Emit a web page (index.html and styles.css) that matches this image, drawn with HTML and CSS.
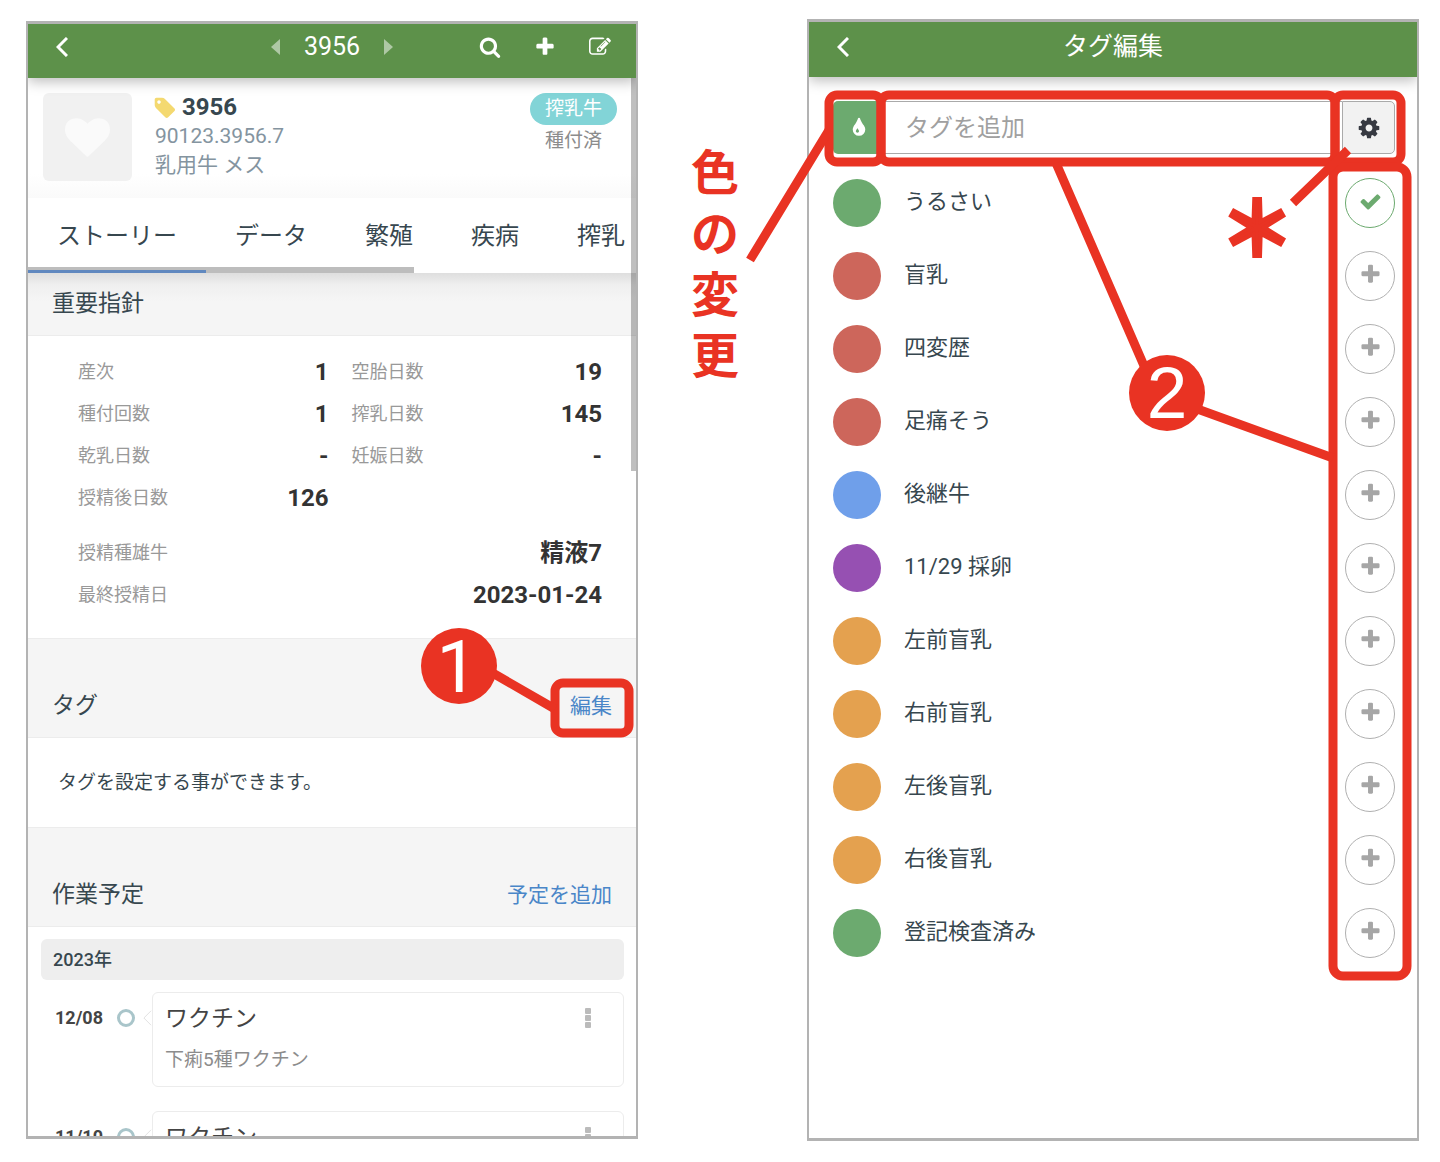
FILE: index.html
```html
<!DOCTYPE html>
<html lang="ja">
<head>
  <meta charset="UTF-8">
  <meta name="viewport" content="width=device-width, initial-scale=1.0">
  <title>タグ編集</title>
  <link rel="stylesheet" href="styles.css">
</head>
<body>
  <!-- Icon set -->
  <svg class="icon-set" aria-hidden="true">
    <symbol id="back" viewBox="0 0 12 20"><path d="M11 1L2 10l9 9" fill="none" stroke="currentColor" stroke-width="3"/></symbol>
    <symbol id="prev" viewBox="0 0 9 16"><path d="M9 0v16L0 8z"/></symbol>
    <symbol id="next" viewBox="0 0 9 16"><path d="M0 0v16l9-8z"/></symbol>
    <symbol id="search" viewBox="0 0 1792 1792"><path d="M1216 832q0-185-131.500-316.500t-316.500-131.500-316.500 131.500-131.500 316.500 131.500 316.500 316.500 131.500 316.500-131.500 131.500-316.500zm512 832q0 52-38 90t-90 38q-54 0-90-38l-343-342q-179 124-399 124-143 0-273.500-55.500t-225-150-150-225-55.500-273.500 55.500-273.500 150-225 225-150 273.500-55.500 273.500 55.500 225 150 150 225 55.500 273.500q0 220-124 399l343 343q37 37 37 90z"/></symbol>
    <symbol id="plus" viewBox="0 0 1792 1792"><path d="M1600 736v192q0 40-28 68t-68 28h-416v416q0 40-28 68t-68 28h-192q-40 0-68-28t-28-68v-416h-416q-40 0-68-28t-28-68v-192q0-40 28-68t68-28h416v-416q0-40 28-68t68-28h192q40 0 68 28t28 68v416h416q40 0 68 28t28 68z"/></symbol>
    <symbol id="edit" viewBox="0 0 1792 1792"><path d="M888 1184l116-116-152-152-116 116v56h96v96h56zm440-720q-16-16-33 1l-350 350q-17 17-1 33t33-1l350-350q17-17 1-33zm80 594v190q0 119-84.500 203.500t-203.500 84.500h-832q-119 0-203.500-84.500t-84.500-203.500v-832q0-119 84.500-203.500t203.500-84.500h832q63 0 117 25 15 7 18 23 3 17-9 29l-49 49q-14 14-32 8-23-6-45-6h-832q-66 0-113 47t-47 113v832q0 66 47 113t113 47h832q66 0 113-47t47-113v-126q0-13 9-22l64-64q15-15 35-7t20 29zm-96-738l288 288-672 672h-288v-288zm444 132l-92 92-288-288 92-92q28-28 68-28t68 28l152 152q28 28 28 68t-28 68z"/></symbol>
    <symbol id="cog" viewBox="0 0 1792 1792"><path d="M1152 896q0-106-75-181t-181-75-181 75-75 181 75 181 181 75 181-75 75-181zm512-109v222q0 12-8 23t-20 13l-185 28q-19 54-39 91 35 50 107 138 10 12 10 25t-9 23q-27 37-99 108t-94 71q-12 0-26-9l-138-108q-44 23-91 38-16 136-29 186-7 28-36 28h-222q-14 0-24.500-8.500t-11.500-21.500l-28-184q-49-16-90-37l-141 107q-10 9-25 9-14 0-25-11-126-114-165-168-7-10-7-23 0-12 8-23 15-21 51-66.500t54-70.500q-27-50-41-99l-183-27q-13-2-21-12.500t-8-23.500v-222q0-12 8-23t19-13l186-28q14-46 39-92-40-57-107-138-10-12-10-24 0-10 9-23 26-36 98.500-107.500t94.500-71.500q13 0 26 10l138 107q44-23 91-38 16-136 29-186 7-28 36-28h222q14 0 24.500 8.500t11.500 21.500l28 184q49 16 90 37l142-107q9-9 24-9 13 0 25 10 129 119 165 170 7 8 7 22 0 12-8 23-15 21-51 66.500t-54 70.500q26 50 41 98l183 28q13 2 21 12.500t8 23.500z"/></symbol>
    <symbol id="check" viewBox="0 0 1792 1792"><path d="M1671 566q0 40-28 68l-724 724-136 136q-28 28-68 28t-68-28l-136-136-362-362q-28-28-28-68t28-68l136-136q28-28 68-28t68 28l294 295 656-657q28-28 68-28t68 28l136 136q28 28 28 68z"/></symbol>
    <symbol id="tint" viewBox="0 0 1792 1792"><path d="M896 1152q0-36-20-69-1-1-15.500-22.500t-25.500-38-25-44-21-50.500q-4-16-21-16t-21 16q-7 23-21 50.500t-25 44-25.500 38-15.500 22.500q-20 33-20 69 0 53 37.500 90.500t90.500 37.500 90.500-37.500 37.500-90.500zm512-128q0 212-150 362t-362 150-362-150-150-362q0-145 81-275 6-9 62.500-90.500t101-151 99.500-178 83-201.500q9-30 34-47t51-17 51.500 17 33.500 47q28 93 83 201.500t99.500 178 101 151 62.500 90.500q81 127 81 275z"/></symbol>
    <symbol id="tag" viewBox="0 0 1792 1792"><path d="M576 448q0-53-37.500-90.500t-90.500-37.500-90.500 37.500-37.500 90.500 37.500 90.500 90.500 37.500 90.500-37.500 37.500-90.500zm1067 576q0 53-37 90l-491 492q-39 37-91 37-53 0-90-37l-715-716q-38-37-64.500-101t-26.500-117v-416q0-52 38-90t90-38h416q53 0 117 26.500t102 64.500l715 714q37 39 37 91z"/></symbol>
    <symbol id="heart" viewBox="0 0 1792 1792"><path d="M896 1664q-26 0-44-18l-624-602q-10-8-27.500-26t-55.500-65.500-68-97.500-53.500-121-23.500-138q0-220 127-344t351-124q62 0 126.500 21.500t120 58 95.500 68.500 76 68q36-36 76-68t95.500-68.500 120-58 126.500-21.500q224 0 351 124t127 344q0 221-229 450l-623 600q-18 18-44 18z"/></symbol>
    <symbol id="dots" viewBox="0 0 6 20"><rect width="6" height="6" rx="1"/><rect y="7" width="6" height="6" rx="1"/><rect y="14" width="6" height="6" rx="1"/></symbol>
    <symbol id="pointer" viewBox="0 0 10 18"><path d="M9 1L1 9l8 8" fill="none" stroke="currentColor" stroke-width="1"/></symbol>
  </svg>

  <div class="guide">
    <!-- Cow detail screen -->
    <section class="phone phone-detail">
      <header class="app-bar">
        <button class="icon-btn back-btn" aria-label="戻る"><svg class="icon-back"><use href="#back"/></svg></button>
        <div class="pager">
          <button class="icon-btn pager-btn" aria-label="前へ"><svg class="icon-caret"><use href="#prev"/></svg></button>
          <h1>3956</h1>
          <button class="icon-btn pager-btn" aria-label="次へ"><svg class="icon-caret"><use href="#next"/></svg></button>
        </div>
        <div class="actions">
          <button class="icon-btn" aria-label="検索"><svg class="icon"><use href="#search"/></svg></button>
          <button class="icon-btn" aria-label="追加"><svg class="icon"><use href="#plus"/></svg></button>
          <button class="icon-btn" aria-label="編集"><svg class="icon"><use href="#edit"/></svg></button>
        </div>
      </header>

      <div class="profile">
        <div class="avatar"><svg class="icon-heart"><use href="#heart"/></svg></div>
        <div class="profile-text">
          <h2><svg class="icon-tag"><use href="#tag"/></svg>3956</h2>
          <p>90123.3956.7</p>
          <p>乳用牛 メス</p>
        </div>
        <div class="profile-status">
          <span class="pill">搾乳牛</span>
          <span class="status">種付済</span>
        </div>
      </div>

      <nav class="tabs">
        <a href="#" class="active">ストーリー</a>
        <a href="#">データ</a>
        <a href="#">繁殖</a>
        <a href="#">疾病</a>
        <a href="#">搾乳</a>
      </nav>

      <div class="section-head first">
        <h3>重要指針</h3>
      </div>
      <div class="metrics">
        <dl class="metric-grid">
          <div><dt>産次</dt><dd>1</dd></div>
          <div><dt>空胎日数</dt><dd>19</dd></div>
          <div><dt>種付回数</dt><dd>1</dd></div>
          <div><dt>搾乳日数</dt><dd>145</dd></div>
          <div><dt>乾乳日数</dt><dd>-</dd></div>
          <div><dt>妊娠日数</dt><dd>-</dd></div>
          <div><dt>授精後日数</dt><dd>126</dd></div>
        </dl>
        <dl class="metric-list">
          <div><dt>授精種雄牛</dt><dd>精液7</dd></div>
          <div><dt>最終授精日</dt><dd>2023-01-24</dd></div>
        </dl>
      </div>

      <div class="section-head">
        <h3>タグ</h3>
        <a href="#">編集</a>
      </div>
      <p class="tag-note">タグを設定する事ができます。</p>

      <div class="section-head">
        <h3>作業予定</h3>
        <a href="#">予定を追加</a>
      </div>
      <div class="schedule">
        <h4>2023年</h4>
        <div class="event">
          <time>12/08</time>
          <span class="dot"></span>
          <svg class="icon-pointer"><use href="#pointer"/></svg>
          <div class="card">
            <div>
              <h5>ワクチン</h5>
              <p>下痢5種ワクチン</p>
            </div>
            <button class="icon-btn menu-btn" aria-label="メニュー"><svg class="icon-dots"><use href="#dots"/></svg></button>
          </div>
        </div>
        <div class="event">
          <time>11/10</time>
          <span class="dot"></span>
          <svg class="icon-pointer"><use href="#pointer"/></svg>
          <div class="card">
            <div>
              <h5>ワクチン</h5>
            </div>
            <button class="icon-btn menu-btn" aria-label="メニュー"><svg class="icon-dots"><use href="#dots"/></svg></button>
          </div>
        </div>
      </div>
      <div class="scrollbar"></div>
    </section>

    <p class="side-note">色の変更</p>

    <!-- Tag edit screen -->
    <section class="phone phone-edit">
      <header class="app-bar">
        <button class="icon-btn back-btn" aria-label="戻る"><svg class="icon-back"><use href="#back"/></svg></button>
        <h1>タグ編集</h1>
      </header>

      <form class="tag-form">
        <button type="button" class="color-btn" aria-label="色の変更"><svg class="icon"><use href="#tint"/></svg></button>
        <input type="text" placeholder="タグを追加" aria-label="タグを追加">
        <button type="button" class="cog-btn" aria-label="設定"><svg class="icon-cog"><use href="#cog"/></svg></button>
      </form>

      <ul class="tag-list">
        <li><span class="swatch green"></span><span class="name">うるさい</span><button class="toggle on" aria-label="うるさいを外す"><svg><use href="#check"/></svg></button></li>
        <li><span class="swatch red"></span><span class="name">盲乳</span><button class="toggle" aria-label="盲乳を追加"><svg><use href="#plus"/></svg></button></li>
        <li><span class="swatch red"></span><span class="name">四変歴</span><button class="toggle" aria-label="四変歴を追加"><svg><use href="#plus"/></svg></button></li>
        <li><span class="swatch red"></span><span class="name">足痛そう</span><button class="toggle" aria-label="足痛そうを追加"><svg><use href="#plus"/></svg></button></li>
        <li><span class="swatch blue"></span><span class="name">後継牛</span><button class="toggle" aria-label="後継牛を追加"><svg><use href="#plus"/></svg></button></li>
        <li><span class="swatch purple"></span><span class="name">11/29 採卵</span><button class="toggle" aria-label="11/29 採卵を追加"><svg><use href="#plus"/></svg></button></li>
        <li><span class="swatch orange"></span><span class="name">左前盲乳</span><button class="toggle" aria-label="左前盲乳を追加"><svg><use href="#plus"/></svg></button></li>
        <li><span class="swatch orange"></span><span class="name">右前盲乳</span><button class="toggle" aria-label="右前盲乳を追加"><svg><use href="#plus"/></svg></button></li>
        <li><span class="swatch orange"></span><span class="name">左後盲乳</span><button class="toggle" aria-label="左後盲乳を追加"><svg><use href="#plus"/></svg></button></li>
        <li><span class="swatch orange"></span><span class="name">右後盲乳</span><button class="toggle" aria-label="右後盲乳を追加"><svg><use href="#plus"/></svg></button></li>
        <li><span class="swatch green"></span><span class="name">登記検査済み</span><button class="toggle" aria-label="登記検査済みを追加"><svg><use href="#plus"/></svg></button></li>
      </ul>
    </section>

    <!-- Callouts over both screens -->
    <svg class="callouts" viewBox="0 0 1440 1162" preserveAspectRatio="none">
      <g class="frames">
        <rect x="555" y="683" width="74" height="50" rx="8"/>
        <rect x="829" y="95" width="52" height="67" rx="8"/>
        <rect x="881" y="95" width="454" height="67" rx="8"/>
        <rect x="1335" y="95" width="66" height="67" rx="8"/>
        <rect x="1333" y="167" width="74" height="809" rx="10"/>
        <path d="M458 653L555 709M750 260L829 130M1293 203L1348 150M1056 163L1148 375M1167 398L1333 458"/>
      </g>
      <circle cx="459" cy="666" r="38"/>
      <circle cx="1167" cy="393" r="38"/>
      <text class="num num-1" x="457" y="692">1</text>
      <text class="num" x="1167" y="418">2</text>
      <text class="star" x="1257" y="256">＊</text>
    </svg>
  </div>
</body>
</html>
```

FILE: styles.css
```css
/* styles.css */

:root {
  --green: #5d914a;
  --callout: #e93323;
  --text-color: #37474f;
  --link-color: #4a86c8;
  --frame-color: #b3b3b3;
}

* {
  box-sizing: border-box;
}

body {
  margin: 0;
  background-color: #fff;
  color: var(--text-color);
  font-family: Roboto, "Noto Sans CJK JP", sans-serif;
}

h1, h2, h3, h4, h5, p, ul, dl, dd {
  margin: 0;
  padding: 0;
  font-weight: 400;
}

a {
  color: var(--link-color);
  text-decoration: none;
}

svg {
  display: block;
  fill: currentColor;
}

.icon-set {
  position: absolute;
  width: 0;
  height: 0;
}

.guide {
  position: relative;
  display: grid;
  grid-template-columns: 1fr 169px 1fr;
  height: 100vh;
  padding: 19px 21px 21px 26px;
}

.phone {
  position: relative;
  overflow: hidden;
  border: solid var(--frame-color);
  border-width: 3px 2px;
  background-color: #fff;
}

.phone-detail {
  margin: 2px 0;
}

/* App bar */
.app-bar {
  position: relative;
  z-index: 1;
  display: grid;
  grid-template-columns: 1fr auto 1fr;
  align-items: center;
  height: 54px;
  padding: 0 25px 8px;
  background-color: var(--green);
  color: #fff;
  box-shadow: 0 4px 12px rgba(0, 0, 0, 0.25);
}

.phone-edit .app-bar {
  height: 55px;
  padding-bottom: 5px;
}

.app-bar h1 {
  font-size: 25px;
  line-height: 30px;
}

.icon-btn {
  padding: 0;
  border: none;
  background: none;
  color: inherit;
  cursor: pointer;
}

.back-btn {
  justify-self: start;
  padding-left: 3px;
}

.icon-back {
  width: 12px;
  height: 20px;
}

.icon-caret {
  width: 9px;
  height: 16px;
}

.icon {
  width: 22px;
  height: 22px;
}

.pager {
  display: flex;
  align-items: center;
  gap: 24px;
}

.pager-btn {
  opacity: 0.5;
}

.actions {
  display: flex;
  justify-content: flex-end;
  gap: 33px;
}

/* Profile */
.profile {
  display: flex;
  height: 120px;
  padding: 15px 19px 0 15px;
  background: linear-gradient(#fff 80%, #fafafa);
}

.avatar {
  display: flex;
  align-items: center;
  justify-content: center;
  width: 89px;
  height: 88px;
  margin-right: 23px;
  border-radius: 6px;
  background-color: #f1f1f1;
  color: #fafafa;
}

.icon-heart {
  width: 45px;
  height: 45px;
}

.profile-text {
  flex: 1;
  color: #8494a0;
  font-size: 21px;
  line-height: 29px;
}

.profile-text h2 {
  display: flex;
  align-items: center;
  gap: 5px;
  margin-left: -2px;
  color: var(--text-color);
  font-size: 24px;
  font-weight: 700;
}

.icon-tag {
  width: 24px;
  height: 24px;
  color: #f4d970;
}

.profile-status {
  display: flex;
  flex-direction: column;
  align-items: center;
  font-size: 19px;
}

.pill {
  padding: 0 15px;
  border-radius: 16px;
  background-color: #82d4d7;
  color: #fff;
  line-height: 32px;
}

.status {
  color: #8c8c8c;
  line-height: 32px;
}

/* Tabs */
.tabs {
  position: relative;
  display: flex;
  height: 75px;
  overflow: hidden;
  background: linear-gradient(#bdbdbd, #bdbdbd) 0 100% / 386px 6px no-repeat #fff;
}

.tabs a {
  flex: none;
  padding: 0 29px;
  color: var(--text-color);
  font-size: 24px;
  line-height: 76px;
}

.tabs a.active {
  height: 75px;
  border-bottom: 3px solid #6088bf;
}

/* Sections */
.section-head {
  display: flex;
  align-items: center;
  justify-content: space-between;
  height: 100px;
  padding: 35px 24px 0;
  border: solid #ececec;
  border-width: 1px 0;
  background-color: #f5f5f5;
  line-height: 30px;
}

.section-head.first {
  height: 63px;
  padding-top: 0;
  border-top: none;
  background: linear-gradient(#dedede, #efefef 12px, #f5f5f5 28px);
}

.section-head h3 {
  font-size: 23px;
}

.section-head a {
  font-size: 21px;
}

.metrics {
  padding: 15px 34px 22px 50px;
}

.metric-grid {
  display: grid;
  grid-template-columns: 1fr 1fr;
  column-gap: 23px;
  margin-bottom: 13px;
}

.metrics dl > div {
  display: flex;
  justify-content: space-between;
  height: 42px;
  line-height: 42px;
}

.metrics dt {
  color: #999;
  font-size: 18px;
}

.metrics dd {
  color: #333;
  font-size: 24px;
  font-weight: 700;
}

.tag-note {
  padding: 0 30px;
  font-size: 19px;
  line-height: 89px;
}

/* Schedule */
.schedule {
  padding: 12px 12px 0 13px;
}

.schedule h4 {
  margin-bottom: 12px;
  padding: 0 12px;
  border-radius: 6px;
  background-color: #eee;
  font-size: 18px;
  font-weight: 500;
  line-height: 41px;
}

.event {
  display: flex;
  align-items: flex-start;
  margin-bottom: 24px;
}

.event time {
  width: 76px;
  padding-left: 14px;
  color: #444;
  font-size: 18px;
  font-weight: 700;
  line-height: 52px;
}

.dot {
  width: 18px;
  height: 18px;
  margin: 17px 8px 0 0;
  border: 3px solid #a9c5ca;
  border-radius: 50%;
}

.icon-pointer {
  width: 9px;
  height: 18px;
  margin-top: 17px;
  color: #e0e0e0;
}

.card {
  flex: 1;
  display: flex;
  align-items: flex-start;
  justify-content: space-between;
  min-height: 95px;
  padding: 11px 32px 11px 12px;
  border: 1px solid #ececec;
  border-radius: 6px;
}

.card h5 {
  color: #444;
  font-size: 23px;
  line-height: 30px;
}

.card p {
  margin-top: 12px;
  color: #8c8c8c;
  font-size: 19px;
  line-height: 28px;
}

.menu-btn {
  margin-top: 4px;
  color: #bbb;
}

.icon-dots {
  width: 6px;
  height: 20px;
}

.scrollbar {
  position: absolute;
  top: 54px;
  right: 0;
  width: 5px;
  height: 393px;
  background-color: rgba(0, 0, 0, 0.25);
}

/* Vertical caption between the screens */
.side-note {
  width: 48px;
  margin: 124px 0 0 53px;
  color: var(--callout);
  font-size: 48px;
  font-weight: 700;
  line-height: 61px;
  word-break: break-all;
}

/* Tag form */
.tag-form {
  display: flex;
  height: 77px;
  padding: 24px 22px 0 24px;
}

.tag-form button {
  display: flex;
  align-items: center;
  justify-content: center;
  padding: 0;
}

.color-btn {
  width: 52px;
  border: none;
  border-radius: 5px 0 0 5px;
  background-color: #6caa6f;
  color: #fff;
}

.tag-form input {
  flex: 1;
  min-width: 0;
  padding: 0 20px;
  border: 1px solid #aaa;
  border-width: 1px 0;
  font: inherit;
  font-size: 24px;
}

.tag-form input::placeholder {
  color: #a0a0a0;
}

.cog-btn {
  width: 53px;
  border: 1px solid #aaa;
  border-radius: 0 5px 5px 0;
  background-color: #f2f2f2;
  color: #373a42;
}

.icon-cog {
  width: 24px;
  height: 24px;
}

/* Tag list */
.tag-list {
  margin: 12px 22px 0 24px;
  list-style: none;
}

.tag-list li {
  display: flex;
  align-items: center;
  height: 73px;
}

.swatch {
  width: 48px;
  height: 48px;
  margin-right: 23px;
  border-radius: 50%;
}

.swatch.green { background-color: #6caa6f; }
.swatch.red { background-color: #cd665b; }
.swatch.blue { background-color: #6f9fea; }
.swatch.purple { background-color: #9650b2; }
.swatch.orange { background-color: #e4a14f; }

.name {
  flex: 1;
  padding-bottom: 2px;
  font-size: 22px;
  line-height: 30px;
}

.toggle {
  display: flex;
  align-items: center;
  justify-content: center;
  width: 50px;
  height: 50px;
  padding: 0 0 2px;
  border: 1px solid #b0b0b0;
  border-radius: 50%;
  background-color: #fff;
  color: #a6a6a6;
}

.toggle.on {
  border-color: #6caa6f;
  color: #6caa6f;
}

.toggle svg {
  width: 23px;
  height: 23px;
}

/* Callouts */
.callouts {
  position: absolute;
  top: 0;
  left: 0;
  z-index: 2;
  width: 100%;
  height: 100%;
  fill: var(--callout);
  pointer-events: none;
}

.frames {
  fill: none;
  stroke: var(--callout);
  stroke-width: 9;
}

.num {
  fill: #fff;
  font-family: "Liberation Sans", Arial, sans-serif;
  font-size: 73px;
  text-anchor: middle;
}

.num-1 {
  font-family: Roboto, sans-serif;
}

.star {
  font-family: "Noto Sans CJK JP", sans-serif;
  font-size: 74px;
  font-weight: 700;
  stroke: var(--callout);
  stroke-width: 4;
  text-anchor: middle;
}
```
